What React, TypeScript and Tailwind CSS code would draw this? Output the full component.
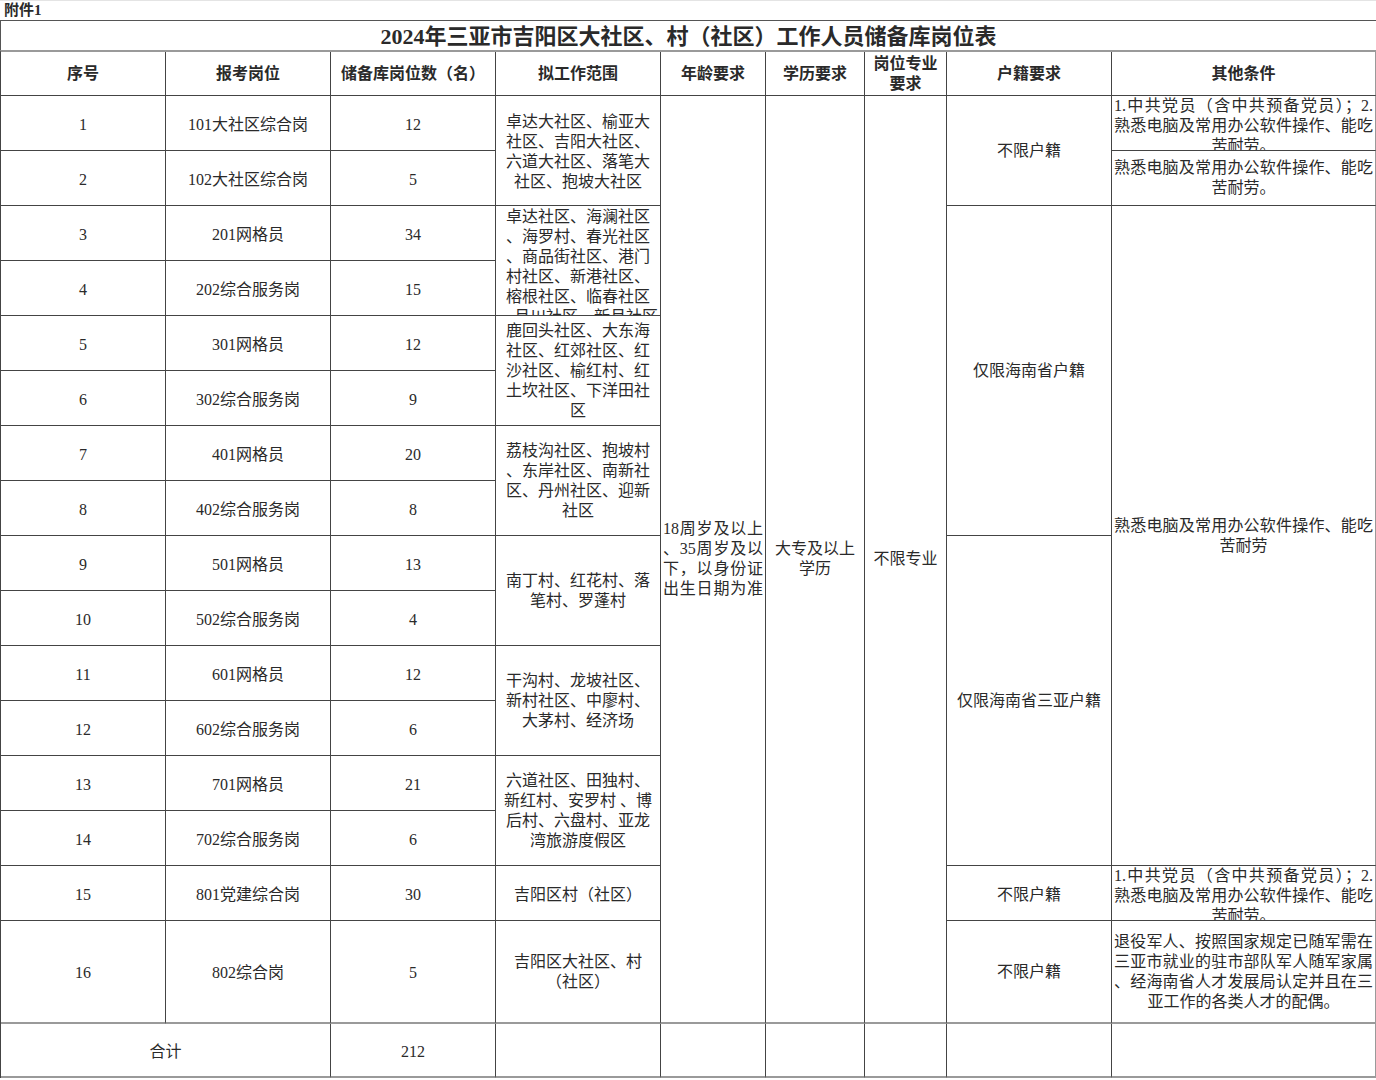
import type { ReactNode } from "react";

const LINE = "border-[#444]";

function Lines({ lines, spread = [] }: { lines: string[]; spread?: number[] }) {
  return (
    <div className="w-full">
      {lines.map((t, i) => (
        <div
          key={i}
          className={
            spread.includes(i)
              ? "whitespace-nowrap px-[2px] [text-align-last:justify] text-justify"
              : "whitespace-nowrap text-center"
          }
        >
          {t}
        </div>
      ))}
    </div>
  );
}

function Cell({
  children,
  className = "",
}: {
  children?: ReactNode;
  className?: string;
}) {
  return (
    <div
      className={`flex items-center justify-center overflow-hidden border-r border-b ${LINE} text-center ${className}`}
    >
      {children}
    </div>
  );
}

const rows = [
  ["1", "101大社区综合岗", "12"],
  ["2", "102大社区综合岗", "5"],
  ["3", "201网格员", "34"],
  ["4", "202综合服务岗", "15"],
  ["5", "301网格员", "12"],
  ["6", "302综合服务岗", "9"],
  ["7", "401网格员", "20"],
  ["8", "402综合服务岗", "8"],
  ["9", "501网格员", "13"],
  ["10", "502综合服务岗", "4"],
  ["11", "601网格员", "12"],
  ["12", "602综合服务岗", "6"],
  ["13", "701网格员", "21"],
  ["14", "702综合服务岗", "6"],
  ["15", "801党建综合岗", "30"],
  ["16", "802综合岗", "5"],
];

const partyLines = [
  "1.中共党员（含中共预备党员）；2.",
  "熟悉电脑及常用办公软件操作、能吃",
  "苦耐劳。",
];

const BOTTOM = "border-b-2 border-b-[#9a9a9a]";
const RIGHT = "border-r-2 border-r-[#9a9a9a]";

function Basic({ r, last = false }: { r: string[]; last?: boolean }) {
  const b = last ? BOTTOM : "";
  return (
    <>
      <Cell className={`pt-[3px] ${b}`}>{r[0]}</Cell>
      <Cell className={`pt-[3px] ${b}`}>{r[1]}</Cell>
      <Cell className={`pt-[3px] ${b}`}>{r[2]}</Cell>
    </>
  );
}

export default function App() {
  return (
    <div className="h-[1080px] w-[1376px] overflow-hidden bg-white font-['Liberation_Serif','Noto_Sans_CJK_SC',serif] text-[16px] leading-[20px] text-[#2a2a2a]">
      <div className="h-[20px] border-t border-[#e4e4e4] pl-1 text-[15px] font-bold leading-[19px]">附件1</div>
      <div className="h-[30px] border-t border-l border-[#555] text-center text-[22px] font-bold leading-[31px]">
        2024年三亚市吉阳区大社区、村（社区）工作人员储备库岗位表
      </div>

      <div className="grid grid-cols-[165px_165px_165px_165px_105px_99px_82px_165px_265px] grid-rows-[44px_repeat(15,55px)_103px_54px] border-t-2 border-l border-t-[#9a9a9a] border-l-[#444]">
        {/* header */}
        <Cell className="font-bold">序号</Cell>
        <Cell className="font-bold">报考岗位</Cell>
        <Cell className="font-bold">储备库岗位数（名）</Cell>
        <Cell className="font-bold">拟工作范围</Cell>
        <Cell className="font-bold">年龄要求</Cell>
        <Cell className="font-bold">学历要求</Cell>
        <Cell className="font-bold">
          <Lines lines={["岗位专业", "要求"]} />
        </Cell>
        <Cell className="font-bold">户籍要求</Cell>
        <Cell className={`font-bold ${RIGHT}`}>其他条件</Cell>

        {/* row 1 */}
        <Basic r={rows[0]} />
        <Cell className="row-span-2 pt-[2px]">
          <Lines lines={["卓达大社区、榆亚大", "社区、吉阳大社区、", "六道大社区、落笔大", "社区、抱坡大社区"]} />
        </Cell>
        <Cell className={`row-span-16 ${BOTTOM}`}>
          <Lines lines={["18周岁及以上", "、35周岁及以", "下，以身份证", "出生日期为准"]} spread={[0, 1, 2, 3]} />
        </Cell>
        <Cell className={`row-span-16 ${BOTTOM}`}>
          <Lines lines={["大专及以上", "学历"]} />
        </Cell>
        <Cell className={`row-span-16 ${BOTTOM}`}>不限专业</Cell>
        <Cell className="row-span-2">不限户籍</Cell>
        <Cell className={`items-start ${RIGHT}`}>
          <Lines lines={partyLines} spread={[0, 1]} />
        </Cell>

        {/* row 2 */}
        <Basic r={rows[1]} />
        <Cell className={RIGHT}>
          <Lines lines={["熟悉电脑及常用办公软件操作、能吃", "苦耐劳。"]} spread={[0]} />
        </Cell>

        {/* row 3 */}
        <Basic r={rows[2]} />
        <Cell className="row-span-2 items-start pt-px">
          <Lines
            lines={[
              "卓达社区、海澜社区",
              "、海罗村、春光社区",
              "、商品街社区、港门",
              "村社区、新港社区、",
              "榕根社区、临春社区",
              "、月川社区、新月社区",
            ]}
          />
        </Cell>
        <Cell className="row-span-6">仅限海南省户籍</Cell>
        <Cell className={`row-span-12 ${RIGHT}`}>
          <Lines lines={["熟悉电脑及常用办公软件操作、能吃", "苦耐劳"]} spread={[0]} />
        </Cell>

        {/* row 4 */}
        <Basic r={rows[3]} />

        {/* row 5 */}
        <Basic r={rows[4]} />
        <Cell className="row-span-2">
          <Lines lines={["鹿回头社区、大东海", "社区、红郊社区、红", "沙社区、榆红村、红", "土坎社区、下洋田社", "区"]} />
        </Cell>

        {/* row 6 */}
        <Basic r={rows[5]} />

        {/* row 7 */}
        <Basic r={rows[6]} />
        <Cell className="row-span-2">
          <Lines lines={["荔枝沟社区、抱坡村", "、东岸社区、南新社", "区、丹州社区、迎新", "社区"]} />
        </Cell>

        {/* row 8 */}
        <Basic r={rows[7]} />

        {/* row 9 */}
        <Basic r={rows[8]} />
        <Cell className="row-span-2">
          <Lines lines={["南丁村、红花村、落", "笔村、罗蓬村"]} />
        </Cell>
        <Cell className="row-span-6">仅限海南省三亚户籍</Cell>

        {/* row 10 */}
        <Basic r={rows[9]} />

        {/* row 11 */}
        <Basic r={rows[10]} />
        <Cell className="row-span-2">
          <Lines lines={["干沟村、龙坡社区、", "新村社区、中廖村、", "大茅村、经济场"]} />
        </Cell>

        {/* row 12 */}
        <Basic r={rows[11]} />

        {/* row 13 */}
        <Basic r={rows[12]} />
        <Cell className="row-span-2">
          <Lines lines={["六道社区、田独村、", "新红村、安罗村 、博", "后村、六盘村、亚龙", "湾旅游度假区"]} />
        </Cell>

        {/* row 14 */}
        <Basic r={rows[13]} />

        {/* row 15 */}
        <Basic r={rows[14]} />
        <Cell className="pt-[3px]">吉阳区村（社区）</Cell>
        <Cell className="pt-[3px]">不限户籍</Cell>
        <Cell className={`items-start ${RIGHT}`}>
          <Lines lines={partyLines} spread={[0, 1]} />
        </Cell>

        {/* row 16 */}
        <Basic r={rows[15]} last />
        <Cell className={BOTTOM}>
          <Lines lines={["吉阳区大社区、村", "（社区）"]} />
        </Cell>
        <Cell className={BOTTOM}>不限户籍</Cell>
        <Cell className={`${BOTTOM} ${RIGHT}`}>
          <Lines
            lines={[
              "退役军人、按照国家规定已随军需在",
              "三亚市就业的驻市部队军人随军家属",
              "、经海南省人才发展局认定并且在三",
              "亚工作的各类人才的配偶。",
            ]}
            spread={[0, 1, 2]}
          />
        </Cell>

        {/* total */}
        <Cell className={`col-span-2 pt-[3px] ${BOTTOM}`}>合计</Cell>
        <Cell className={`pt-[3px] ${BOTTOM}`}>212</Cell>
        <Cell className={BOTTOM} />
        <Cell className={BOTTOM} />
        <Cell className={BOTTOM} />
        <Cell className={BOTTOM} />
        <Cell className={BOTTOM} />
        <Cell className={`${BOTTOM} ${RIGHT}`} />
      </div>
    </div>
  );
}
